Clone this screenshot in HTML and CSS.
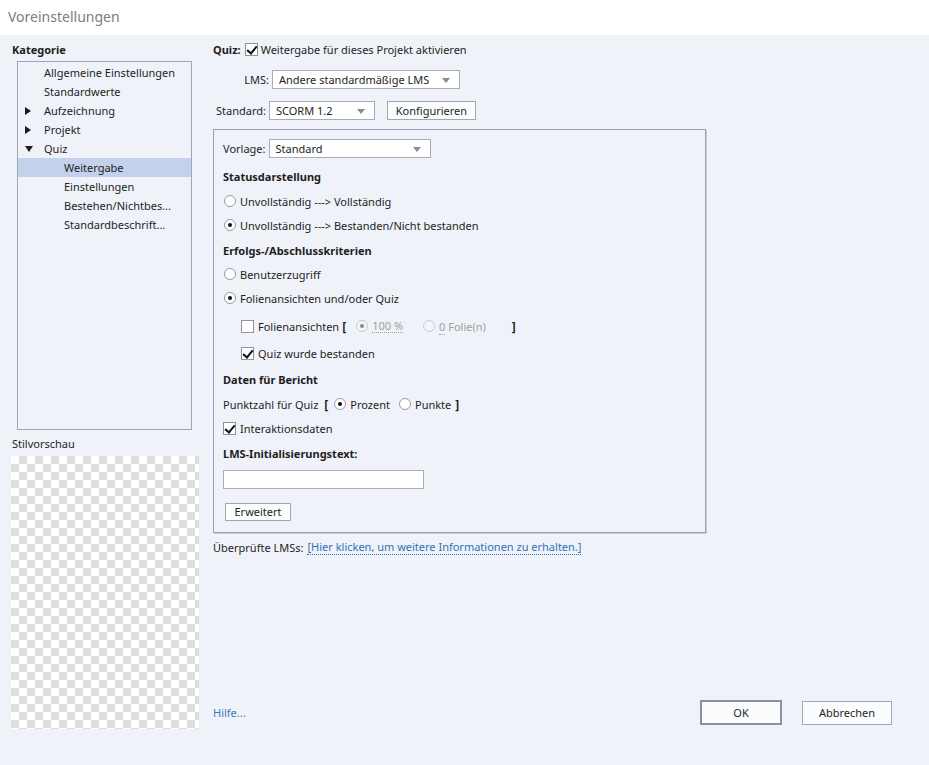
FILE: index.html
```html
<!DOCTYPE html>
<html lang="de">
<head>
<meta charset="utf-8">
<title>Voreinstellungen</title>
<link rel="stylesheet" href="styles.css">
</head>
<body>
<header class="titlebar">Voreinstellungen</header>
<div class="main">
  <aside class="left">
    <div class="heading">Kategorie</div>
    <ul class="tree">
      <li class="node"><span class="tw"></span>Allgemeine Einstellungen</li>
      <li class="node"><span class="tw"></span>Standardwerte</li>
      <li class="node"><span class="tw"><span class="tri-r"></span></span>Aufzeichnung</li>
      <li class="node"><span class="tw"><span class="tri-r"></span></span>Projekt</li>
      <li class="node"><span class="tw"><span class="tri-d"></span></span>Quiz</li>
      <li class="node sub selected">Weitergabe</li>
      <li class="node sub">Einstellungen</li>
      <li class="node sub">Bestehen/Nichtbes...</li>
      <li class="node sub">Standardbeschrift...</li>
    </ul>
    <div class="preview-label">Stilvorschau</div>
    <div class="checker"></div>
  </aside>
  <section class="right">
    <div class="row quiz-row">
      <span class="bold">Quiz:</span>
      <span class="cb checked"></span>
      <span>Weitergabe für dieses Projekt aktivieren</span>
    </div>
    <div class="row lms-row">
      <span class="lbl lbl-lms">LMS:</span>
      <div class="select sel-lms">Andere standardmäßige LMS<span class="arrow"></span></div>
    </div>
    <div class="row std-row">
      <span class="lbl">Standard:</span>
      <div class="select sel-std">SCORM 1.2<span class="arrow"></span></div>
      <button class="btn btn-konf">Konfigurieren</button>
    </div>

    <div class="group">
      <div class="row vorlage-row">
        <span class="lbl">Vorlage:</span>
        <div class="select sel-vorlage">Standard<span class="arrow"></span></div>
      </div>
      <div class="line bold status">Statusdarstellung</div>
      <div class="line mt1"><span class="rb"></span>Unvollständig ---&gt; Vollständig</div>
      <div class="line"><span class="rb on"></span>Unvollständig ---&gt; Bestanden/Nicht bestanden</div>
      <div class="line bold mt1">Erfolgs-/Abschlusskriterien</div>
      <div class="line"><span class="rb"></span>Benutzerzugriff</div>
      <div class="line"><span class="rb on"></span>Folienansichten und/oder Quiz</div>
      <div class="line indent mt4">
        <span class="cb"></span>Folienansichten <span class="brk">[</span>
        <span class="rb on dis"></span><span class="dim dotted w100">100 %</span>
        <span class="rb dis"></span><span class="dim"><span class="dotted">0</span> Folie(n)</span>
        <span class="brk brk-end">]</span>
      </div>
      <div class="line indent mt3"><span class="cb checked"></span>Quiz wurde bestanden</div>
      <div class="line bold mt2">Daten für Bericht</div>
      <div class="line mt1">Punktzahl für Quiz <span class="brk brk-p">[</span>
        <span class="rb on"></span>Prozent
        <span class="rb gap"></span>Punkte <span class="brk brk-pe">]</span></div>
      <div class="line"><span class="cb checked"></span>Interaktionsdaten</div>
      <div class="line bold mt1">LMS-Initialisierungstext:</div>
      <div class="textinput"></div>
      <button class="btn btn-erw">Erweitert</button>
    </div>

    <div class="line info">Überprüfte LMSs: <a class="link">[Hier klicken, um weitere Informationen zu erhalten.]</a></div>

    <div class="footer">
      <a class="hilfe">Hilfe...</a>
      <div class="buttons">
        <button class="btn btn-ok">OK</button>
        <button class="btn btn-cancel">Abbrechen</button>
      </div>
    </div>
  </section>
</div>
</body>
</html>
```
FILE: styles.css
```css
* { box-sizing: border-box; }
html, body { margin: 0; padding: 0; }
body {
  width: 929px;
  height: 765px;
  background: #eff2f8;
  font-family: "Noto Sans", "Open Sans", sans-serif;
  font-size: 11px;
  color: #1e1e1e;
  overflow: hidden;
}
.titlebar {
  height: 35px;
  background: #ffffff;
  color: #7d7d7d;
  font-size: 14px;
  padding: 7px 0 0 8px;
  line-height: 20px;
}
.main {
  display: flex;
  height: 730px;
}
.left {
  width: 200px;
  padding: 7px 0 0 12px;
  flex: none;
}
.heading {
  font-weight: bold;
  line-height: 16px;
  margin-bottom: 3px;
}
.tree {
  list-style: none;
  margin: 0 0 0 5px;
  padding: 1px 0 0 0;
  width: 175px;
  height: 369px;
  border: 1px solid #a2a5b7;
}
.node {
  height: 19px;
  line-height: 19px;
  display: flex;
  align-items: center;
  padding-left: 6px;
}
.tw {
  width: 20px;
  display: inline-flex;
  align-items: center;
  padding-left: 1px;
}
.tri-r {
  width: 0; height: 0;
  border-top: 4px solid transparent;
  border-bottom: 4px solid transparent;
  border-left: 6px solid #1a1a1a;
}
.tri-d {
  width: 0; height: 0;
  border-left: 4px solid transparent;
  border-right: 4px solid transparent;
  border-top: 6px solid #1a1a1a;
}
.node.sub { padding-left: 46px; }
.node.selected { background: #c3d1eb; }
.preview-label {
  margin-top: 6px;
  line-height: 16px;
}
.checker {
  margin: 4px 0 0 -1px;
  width: 188px;
  height: 273px;
  background-color: #fff;
  background-image: conic-gradient(#dedede 0 25%, #fff 0 50%, #dedede 0 75%, #fff 0);
  background-size: 16px 16px;
}

.right {
  flex: 1;
  padding: 4px 0 0 13px;
  display: flex;
  flex-direction: column;
}
.row { display: flex; align-items: center; }
.bold { font-weight: bold; }
.quiz-row { height: 20px; }
.quiz-row .cb { margin: 0 3px 0 4px; }
.lms-row { margin-top: 11px; height: 19px; }
.lbl { margin-right: 3px; }
.lbl-lms { width: 56px; text-align: right; }
.std-row { margin-top: 12px; height: 19px; padding-left: 3px; }
.select {
  position: relative;
  height: 19px;
  line-height: 17px;
  background: #fff;
  border: 1px solid #a9acb8;
  padding-left: 6px;
  white-space: nowrap;
}
.arrow {
  position: absolute;
  right: 9px;
  top: 7px;
  width: 0; height: 0;
  border-left: 4px solid transparent;
  border-right: 4px solid transparent;
  border-top: 5px solid #8a8d96;
}
.sel-lms { width: 188px; }
.sel-std { width: 106px; }
.sel-vorlage { width: 162px; }
.btn {
  font-family: inherit;
  font-size: 11px;
  color: #1e1e1e;
  background: #fbfcfd;
  border: 1px solid #a3a6b3;
  padding: 0;
  height: 19px;
  line-height: 17px;
}
.btn-konf { width: 89px; margin-left: 12px; }

.group {
  margin-top: 9px;
  width: 493px;
  height: 404px;
  border: 1px solid #9c9fb3;
  box-shadow: 1px 1px 0 #c9ccd8;
  padding: 8px 0 0 9px;
}
.vorlage-row { height: 20px; }
.line {
  height: 24px;
  display: flex;
  align-items: center;
  white-space: nowrap;
}
.status { margin-top: 6px; }
.mt1 { margin-top: 1px; }
.mt2 { margin-top: 2px; }
.mt3 { margin-top: 3px; }
.mt4 { margin-top: 4px; }
.indent { padding-left: 18px; }
.cb {
  width: 13px;
  height: 13px;
  border: 1px solid #8f929c;
  background: #fff;
  margin-right: 4px;
  position: relative;
  flex: none;
}
.cb.checked::after {
  content: "";
  position: absolute;
  left: 3px;
  top: 0px;
  width: 4px;
  height: 8px;
  border-right: 2px solid #111;
  border-bottom: 2px solid #111;
  transform: rotate(40deg);
}
.rb {
  width: 12px;
  height: 12px;
  border: 1px solid #9a9ca6;
  border-radius: 50%;
  background: #fff;
  margin: 0 4px 0 1px;
  position: relative;
  flex: none;
}
.rb.on::after {
  content: "";
  position: absolute;
  left: 3px;
  top: 3px;
  width: 4px;
  height: 4px;
  border-radius: 50%;
  background: #111;
}
.rb.dis { border-color: #c8cad0; background: #f4f5f8; }
.rb.dis.on::after { background: #888; }
.brk { font-weight: bold; margin: 0 9px 0 3px; font-size: 12px; }
.dim { color: #a0a0a0; }
.dotted { border-bottom: 1px dotted #a0a0a0; line-height: 13px; }
.w100 { margin-right: 19px; }
.brk-end { margin-left: 26px; }
.brk-p { margin: 0 5px 0 6px; }
.brk-pe { margin-left: 4px; }
.rb.gap { margin-left: 9px; }
.textinput {
  margin-top: 5px;
  width: 201px;
  height: 19px;
  background: #fff;
  border: 1px solid #a9acb8;
}
.btn-erw {
  margin-top: 14px;
  margin-left: 2px;
  width: 66px;
  height: 18px;
  line-height: 16px;
  display: block;
}
.info { margin-top: 2px; height: 24px; }
.link {
  color: #2f72b8;
  border-bottom: 1px dotted #2f72b8;
  line-height: 14px;
  margin-left: 4px;
}
.footer {
  margin-top: auto;
  margin-bottom: 40px;
  display: flex;
  align-items: center;
  justify-content: space-between;
  padding-right: 37px;
}
.hilfe { color: #3a7cc4; }
.buttons { display: flex; gap: 20px; align-items: center; }
.btn-ok {
  width: 82px;
  height: 25px;
  border: 2px solid #8c90a2;
}
.btn-cancel {
  width: 90px;
  height: 24px;
}
```
